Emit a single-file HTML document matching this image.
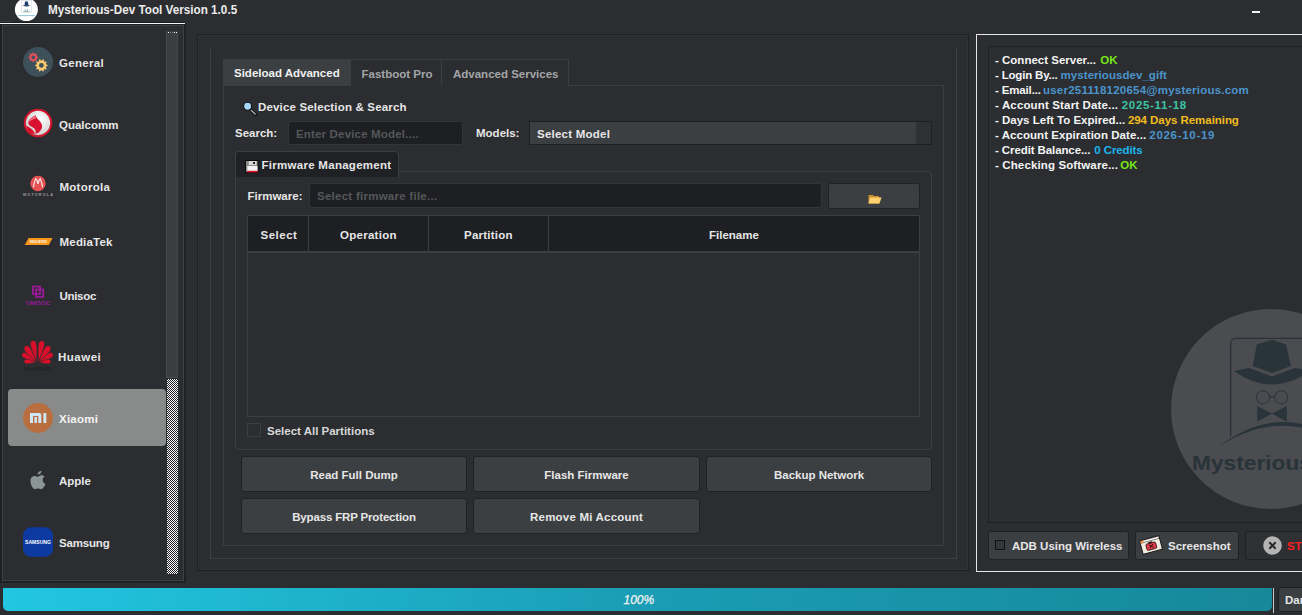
<!DOCTYPE html>
<html><head><meta charset="utf-8">
<style>
*{margin:0;padding:0;box-sizing:border-box}
html,body{width:1302px;height:615px;overflow:hidden;background:#2b2d30;font-family:"Liberation Sans",sans-serif;font-weight:bold;color:#e6e6e6}
.a{position:absolute}
.t{position:absolute;white-space:nowrap;line-height:14px;font-size:11.5px}
.bx{position:absolute;border:1px solid #3e4043}
.btn{position:absolute;background:#3c3f42;border:1px solid #1f2124;border-radius:3px}
</style></head><body>

<!-- title bar -->
<svg class="a" style="left:14px;top:0" width="26" height="22" viewBox="14 0 26 22"><circle cx="26.4" cy="9.6" r="11.5" fill="#fff"/><rect x="21.6" y="0.5" width="9.8" height="11.8" fill="none" stroke="#d0d8e0" stroke-width="0.6"/><path d="M25 1.6 H27.9 L28.4 5 H24.5Z M22.4 5.5 Q26.4 4.3 30.6 5.5 Q26.4 7.4 22.4 5.5Z" fill="#1e3a6a"/><path d="M25.2 9.2 V10.8 M27.4 9.2 V10.8 M23.5 11.4 H29.5" stroke="#3a7a80" stroke-width="0.6"/><rect x="18.2" y="15" width="16.6" height="1.1" fill="#9ccbe0"/></svg>
<div class="t" style="left:48px;top:2.5px;font-size:12.8px;color:#ececec;transform:scaleX(0.915);transform-origin:0 0">Mysterious-Dev Tool Version 1.0.5</div>
<div class="a" style="left:1252px;top:11px;width:8px;height:2px;background:#f0f0f0"></div>
<div class="a" style="left:0;top:21px;width:12px;height:1px;background:#3a3c3f"></div>
<div class="a" style="left:0;top:22px;width:185px;height:1px;background:#1c1d20"></div>
<div class="a" style="left:0;top:23px;width:185px;height:1px;background:#f4f4f4"></div>

<!-- sidebar -->
<div class="a" style="left:0;top:24px;width:186px;height:559px;background:#1f2023"></div>
<div class="a" style="left:2px;top:25px;width:182px;height:556px;border:1px solid #3e4043;background:#2b2d30"></div>
<!-- scrollbar -->
<div class="a" style="left:166px;top:31px;width:12px;height:347px;background:#3b3e41;border:1px solid #45484b;border-top:none"></div>
<div class="a" style="left:168px;top:32px;width:1px;height:1px;background:#fff"></div><div class="a" style="left:170px;top:32px;width:1px;height:1px;background:#777"></div><div class="a" style="left:172px;top:32px;width:1px;height:1px;background:#777"></div><div class="a" style="left:174px;top:32px;width:1px;height:1px;background:#fff"></div><div class="a" style="left:176px;top:32px;width:1px;height:1px;background:#fff"></div>
<div class="a" style="left:167px;top:379px;width:11px;height:195px;background-color:#1c1d20;background-image:conic-gradient(#fff 25%,transparent 0 50%,#fff 0 75%,transparent 0);background-size:2px 2px"></div>
<!-- selected xiaomi -->
<div class="a" style="left:8px;top:389px;width:158px;height:57px;border-radius:4px;background:#898b8b"></div>
<!-- icons -->
<svg class="a" style="left:0;top:25px" width="60" height="555" viewBox="0 25 60 555">
 <!-- general -->
 <circle cx="38" cy="62" r="15" fill="#3e515a"/>
 <path fill-rule="evenodd" fill="#e2505a" d="M38.19 56.95 L38.19 57.65 L36.81 58.47 L36.61 58.95 L37.00 60.51 L36.51 61.00 L34.95 60.61 L34.47 60.81 L33.65 62.19 L32.95 62.19 L32.13 60.81 L31.65 60.61 L30.09 61.00 L29.60 60.51 L29.99 58.95 L29.79 58.47 L28.41 57.65 L28.41 56.95 L29.79 56.13 L29.99 55.65 L29.60 54.09 L30.09 53.60 L31.65 53.99 L32.13 53.79 L32.95 52.41 L33.65 52.41 L34.47 53.79 L34.95 53.99 L36.51 53.60 L37.00 54.09 L36.61 55.65 L36.81 56.13Z M35.20 57.30 A1.9 1.9 0 1 0 31.40 57.30 A1.9 1.9 0 1 0 35.20 57.30Z"/>
 <path fill-rule="evenodd" fill="#fbc96c" d="M47.69 65.04 L47.69 65.76 L46.04 66.62 L45.87 67.14 L46.70 68.81 L46.28 69.39 L44.44 69.12 L44.00 69.44 L43.68 71.27 L43.01 71.49 L41.67 70.19 L41.13 70.19 L39.79 71.49 L39.12 71.27 L38.80 69.44 L38.36 69.12 L36.52 69.39 L36.10 68.81 L36.93 67.14 L36.76 66.62 L35.11 65.76 L35.11 65.04 L36.76 64.18 L36.93 63.66 L36.10 61.99 L36.52 61.41 L38.36 61.68 L38.80 61.36 L39.12 59.53 L39.79 59.31 L41.13 60.61 L41.67 60.61 L43.01 59.31 L43.68 59.53 L44.00 61.36 L44.44 61.68 L46.28 61.41 L46.70 61.99 L45.87 63.66 L46.04 64.18Z M43.80 65.40 A2.4 2.4 0 1 0 39.00 65.40 A2.4 2.4 0 1 0 43.80 65.40Z"/>
 <!-- qualcomm -->
 <defs><radialGradient id="qg" cx="0.6" cy="0.35" r="0.7"><stop offset="0" stop-color="#ffffff"/><stop offset="1" stop-color="#c9c9c9"/></radialGradient></defs>
 <circle cx="38" cy="123" r="13.2" fill="url(#qg)" stroke="#d0142c" stroke-width="2.1"/>
 <path d="M35.5 115.3 C32 117.3 28.3 119.8 28.3 122.8 C28.3 125 30.3 126.2 32.5 127.2 C35 128.4 36.2 130.2 35.6 133.8 C38.8 133.2 41.3 130.5 42 127.3 C42.6 124 40.2 121.5 38.2 119.5 C36.9 118.2 36.1 117 35.5 115.3Z" fill="#d8122e"/><path d="M35.5 115.3 C32 117.3 28.3 119.8 28.3 122.8 C30 121 32.5 119.5 35.8 118.6Z" fill="#ea6a7a"/><path d="M26.2 125.8 C29.5 127.2 33.6 129.4 34.9 134 C30 134.2 26.8 130.8 26.2 125.8Z" fill="#d8122e"/>
 <!-- motorola -->
 <circle cx="38" cy="183.5" r="7.7" fill="#e85252"/>
 <path d="M33.4 187.2 Q34.6 181 35.8 178.8 Q37 179.5 38 184 Q39 179.5 40.2 178.8 Q41.4 181 42.6 187.2" fill="none" stroke="#f4f4f4" stroke-width="1.1"/>
 <text x="23" y="196.2" font-size="3.8" font-family="Liberation Sans" font-weight="bold" fill="#9a9c9e" textLength="30" lengthAdjust="spacing">MOTOROLA</text>
 <!-- mediatek -->
 <path d="M28.6 238 L52.5 238 L48.9 245 L24.7 245Z" fill="#f7961c"/>
 <text x="38.5" y="243" font-size="3.4" font-family="Liberation Sans" font-weight="bold" fill="#fff4e0" text-anchor="middle">MEDIATEK</text>
 <!-- unisoc -->
 <rect x="33" y="286.5" width="7" height="7.5" fill="none" stroke="#9a1a9a" stroke-width="1.8"/>
 <rect x="36" y="289.5" width="7.2" height="7.5" fill="none" stroke="#9a1a9a" stroke-width="1.8"/>
 <text x="26" y="305" font-size="5.8" font-family="Liberation Sans" font-weight="bold" fill="#9a1a9a" textLength="24.5" lengthAdjust="spacingAndGlyphs">UNISOC</text>
 <!-- huawei -->
 <g fill="#d8102a" stroke="#2b2d30" stroke-width="0.45" transform="translate(37.5,362.2)"><path d="M0 0 C-1.50 -7.63 -3.00 -13.08 -3.00 -17.44 C-3.00 -21.15 -1.35 -21.80 0 -21.80 C1.35 -21.80 3.00 -21.15 3.00 -17.44 C3.00 -13.08 1.50 -7.63 0 0Z" transform="translate(-0.9,0) rotate(-10)"/><path d="M0 0 C-1.50 -7.63 -3.00 -13.08 -3.00 -17.44 C-3.00 -21.15 -1.35 -21.80 0 -21.80 C1.35 -21.80 3.00 -21.15 3.00 -17.44 C3.00 -13.08 1.50 -7.63 0 0Z" transform="translate(0.9,0) scale(-1,1) rotate(-10)"/><path d="M0 0 C-1.50 -6.82 -3.00 -11.70 -3.00 -15.60 C-3.00 -18.91 -1.35 -19.50 0 -19.50 C1.35 -19.50 3.00 -18.91 3.00 -15.60 C3.00 -11.70 1.50 -6.82 0 0Z" transform="translate(-1.0,0) rotate(-35)"/><path d="M0 0 C-1.50 -6.82 -3.00 -11.70 -3.00 -15.60 C-3.00 -18.91 -1.35 -19.50 0 -19.50 C1.35 -19.50 3.00 -18.91 3.00 -15.60 C3.00 -11.70 1.50 -6.82 0 0Z" transform="translate(1.0,0) scale(-1,1) rotate(-35)"/><path d="M0 0 C-1.35 -5.77 -2.70 -9.90 -2.70 -13.20 C-2.70 -16.00 -1.22 -16.50 0 -16.50 C1.22 -16.50 2.70 -16.00 2.70 -13.20 C2.70 -9.90 1.35 -5.77 0 0Z" transform="translate(-1.0,0) rotate(-60)"/><path d="M0 0 C-1.35 -5.77 -2.70 -9.90 -2.70 -13.20 C-2.70 -16.00 -1.22 -16.50 0 -16.50 C1.22 -16.50 2.70 -16.00 2.70 -13.20 C2.70 -9.90 1.35 -5.77 0 0Z" transform="translate(1.0,0) scale(-1,1) rotate(-60)"/><path d="M0 0 C-1.15 -4.38 -2.30 -7.50 -2.30 -10.00 C-2.30 -12.12 -1.03 -12.50 0 -12.50 C1.03 -12.50 2.30 -12.12 2.30 -10.00 C2.30 -7.50 1.15 -4.38 0 0Z" transform="translate(-0.8,0) rotate(-86)"/><path d="M0 0 C-1.15 -4.38 -2.30 -7.50 -2.30 -10.00 C-2.30 -12.12 -1.03 -12.50 0 -12.50 C1.03 -12.50 2.30 -12.12 2.30 -10.00 C2.30 -7.50 1.15 -4.38 0 0Z" transform="translate(0.8,0) scale(-1,1) rotate(-86)"/></g>
 <text x="23.2" y="370.6" font-size="6" font-family="Liberation Sans" fill="#222326" textLength="29" lengthAdjust="spacingAndGlyphs">HUAWEI</text>
 <!-- xiaomi -->
 <circle cx="38" cy="418" r="15" fill="#b86e3e"/>
 <path d="M30 413 H39.5 Q41.3 413 41.3 415 V423 H38.3 V416 H33 V423 H30Z" fill="#cfe6f6"/>
 <rect x="34.4" y="417" width="2.5" height="6" fill="#cfe6f6"/>
 <rect x="43.4" y="413" width="2.9" height="10" fill="#cfe6f6"/>
 <!-- apple -->
 <path d="M38 477 C35 475.2 30.5 475.8 30.5 481 C30.5 485.5 33.3 489.2 35 489.2 C36.3 489.2 37 488.5 38 488.5 C39 488.5 39.8 489.2 41 489.2 C42.8 489.2 44.5 486.5 45.5 484 C43.5 483 42.7 481.5 42.7 480 C42.7 478.5 43.5 477.3 44.6 476.7 C43.5 475.3 41.8 475 40.8 475.2 C39.6 475.4 38.8 476.3 38 477Z" fill="#8b9595"/>
 <path d="M37.6 474.6 C37.5 472.6 39 471 41.5 470.8 C41.5 473 40 474.5 37.6 474.6Z" fill="#8b9595"/>
 <!-- samsung -->
 <rect x="23" y="527.3" width="30" height="29.5" rx="8" fill="#0c3aa0"/>
 <text x="38" y="544.2" font-size="6.2" font-family="Liberation Sans" font-weight="bold" fill="#ffffff" text-anchor="middle" textLength="26" lengthAdjust="spacingAndGlyphs">SAMSUNG</text>
</svg>
<div class="t" style="left:59px;top:56px;letter-spacing:0.3px">General</div>
<div class="t" style="left:59px;top:117.5px">Qualcomm</div>
<div class="t" style="left:59.5px;top:180px;letter-spacing:0.25px">Motorola</div>
<div class="t" style="left:59.5px;top:235px;letter-spacing:0.2px">MediaTek</div>
<div class="t" style="left:59.5px;top:289px;letter-spacing:-0.3px">Unisoc</div>
<div class="t" style="left:58px;top:350px;letter-spacing:0.5px">Huawei</div>
<div class="t" style="left:59px;top:411.5px;color:#f4f4f4;letter-spacing:0.25px">Xiaomi</div>
<div class="t" style="left:59px;top:474px">Apple</div>
<div class="t" style="left:59px;top:536px;letter-spacing:-0.17px">Samsung</div>

<!-- main panel -->
<div class="a" style="left:197px;top:34px;width:772px;height:537px;border:1px solid #1f2023"></div>
<div class="a" style="left:198px;top:35px;width:770px;height:535px;border:1px solid #303236"></div>
<div class="bx" style="left:210px;top:47px;width:747px;height:512px;border-top-color:transparent"></div>
<!-- tabs -->
<div class="bx" style="left:223px;top:85px;width:721px;height:461px;border-color:#3c3e41"></div>
<div class="a" style="left:223px;top:59px;width:128px;height:27px;background:#3c3f42"></div>
<div class="a" style="left:350px;top:59px;width:92px;height:27px;border:1px solid #3c3e41;border-bottom:none;border-left:none"></div>
<div class="a" style="left:441px;top:59px;width:128px;height:27px;border:1px solid #3c3e41;border-bottom:none;border-left:none"></div>
<div class="a" style="left:351px;top:85px;width:217px;height:1px;background:#2b2d30"></div>
<div class="t" style="left:234px;top:66px;color:#f0f0f0">Sideload Advanced</div>
<div class="t" style="left:361.5px;top:67px;color:#a4a6a8">Fastboot Pro</div>
<div class="t" style="left:453px;top:67px;color:#a4a6a8">Advanced Services</div>

<!-- device selection -->
<svg class="a" style="left:238px;top:98px" width="24" height="20" viewBox="238 98 24 20"><line x1="251" y1="110" x2="255.6" y2="114.4" stroke="#101010" stroke-width="3.4" stroke-linecap="round"/><line x1="251.4" y1="110.4" x2="255.2" y2="114" stroke="#a8b4b8" stroke-width="1.4" stroke-linecap="round"/><circle cx="247.6" cy="106.2" r="4" fill="#a8d8f8" stroke="#101010" stroke-width="1.1"/></svg>
<div class="t" style="left:258px;top:100px;letter-spacing:0.17px">Device Selection &amp; Search</div>
<div class="t" style="left:235px;top:126px">Search:</div>
<div class="a" style="left:288px;top:121px;width:175px;height:24px;background:#1e1f22;border:1px solid #333538;border-radius:3px"></div>
<div class="t" style="left:296px;top:126.5px;color:#55575a;letter-spacing:0.17px">Enter Device Model....</div>
<div class="t" style="left:476px;top:126px">Models:</div>
<div class="a" style="left:529px;top:121px;width:403px;height:24px;background:#3c3f42;border:1px solid #1f2023"></div>
<div class="a" style="left:916px;top:122px;width:15px;height:22px;background:#2e3033"></div>
<div class="t" style="left:537px;top:126.5px;letter-spacing:0.24px">Select Model</div>

<!-- firmware group -->
<div class="a" style="left:235px;top:171px;width:697px;height:279px;border:1px solid #3c3e41;border-radius:0 4px 4px 4px"></div>
<div class="a" style="left:235px;top:151px;width:164px;height:26px;background:#202124;border:1px solid #3c3e41;border-bottom:none;border-radius:4px 4px 0 0"></div>
<svg class="a" style="left:242px;top:156px" width="20" height="20" viewBox="242 156 20 20"><rect x="245.5" y="160.5" width="12.5" height="12" fill="#8c8c8c" stroke="#0a0a0a" stroke-width="1"/><rect x="248.8" y="161" width="7.8" height="4" fill="#d8d8d8"/><rect x="253" y="162" width="2" height="2" fill="#202020"/><rect x="247.3" y="166" width="10.2" height="5" fill="#f2f2f2"/><rect x="247" y="170.8" width="10.6" height="1.6" fill="#e0102a"/></svg>
<div class="t" style="left:261.5px;top:158px;letter-spacing:0.28px">Firmware Management</div>
<div class="t" style="left:247.5px;top:189px">Firmware:</div>
<div class="a" style="left:309px;top:183px;width:513px;height:25px;background:#1e1f22;border:1px solid #333538;border-radius:3px"></div>
<div class="t" style="left:317px;top:189px;color:#55575a;letter-spacing:0.26px">Select firmware file...</div>
<div class="btn" style="left:828px;top:183px;width:92px;height:26px"></div>
<svg class="a" style="left:868px;top:194px" width="14" height="10" viewBox="0 0 14 10"><path d="M0.5 1 H5 L6 2 H11 V9.5 H0.5Z" fill="#c89030"/><path d="M2 3.5 H13.5 L11.5 9.5 H0.5Z" fill="#ffd070"/></svg>

<!-- table -->
<div class="a" style="left:247px;top:215px;width:673px;height:202px;border:1px solid #3c3e41;background:#2b2d30"></div>
<div class="a" style="left:248px;top:216px;width:671px;height:37px;background:#1e1f22;border-bottom:2px solid #3c3e41"></div>
<div class="a" style="left:308px;top:216px;width:1px;height:36px;background:#3c3e41"></div>
<div class="a" style="left:428px;top:216px;width:1px;height:36px;background:#3c3e41"></div>
<div class="a" style="left:548px;top:216px;width:1px;height:36px;background:#3c3e41"></div>
<div class="t" style="left:260.5px;top:228px;letter-spacing:0.5px">Select</div>
<div class="t" style="left:340px;top:228px;letter-spacing:0.27px">Operation</div>
<div class="t" style="left:464px;top:228px;letter-spacing:0.24px">Partition</div>
<div class="t" style="left:709px;top:228px">Filename</div>

<div class="a" style="left:247px;top:423px;width:14px;height:14px;border:1px solid #3c3e41"></div>
<div class="t" style="left:267px;top:423.5px;color:#d8d8d8">Select All Partitions</div>

<!-- buttons -->
<div class="btn" style="left:241px;top:456px;width:226px;height:36px"></div>
<div class="btn" style="left:473px;top:456px;width:227px;height:36px"></div>
<div class="btn" style="left:706px;top:456px;width:226px;height:36px"></div>
<div class="btn" style="left:241px;top:498px;width:226px;height:36px"></div>
<div class="btn" style="left:473px;top:498px;width:227px;height:36px"></div>
<div class="t" style="left:241px;top:467.5px;width:226px;text-align:center">Read Full Dump</div>
<div class="t" style="left:473px;top:467.5px;width:227px;text-align:center">Flash Firmware</div>
<div class="t" style="left:706px;top:467.5px;width:226px;text-align:center">Backup Network</div>
<div class="t" style="left:241px;top:509.5px;width:226px;text-align:center"><span style="letter-spacing:-0.16px">Bypass FRP Protection</span></div>
<div class="t" style="left:473px;top:509.5px;width:227px;text-align:center"><span style="letter-spacing:0.2px">Remove Mi Account</span></div>

<!-- right panel -->
<div class="a" style="left:976px;top:34px;width:330px;height:538px;border:1px solid #e8e8e8"></div>
<div class="a" style="left:988px;top:46px;width:320px;height:477px;border:1px solid #1f2023;background:#2b2d30"></div>
<!-- watermark -->
<svg class="a" style="left:1170px;top:309px" width="132" height="201" viewBox="1170 309 132 201">
 <circle cx="1271" cy="409" r="100" fill="#4a4c50"/>
 <g fill="#29333a" stroke="#29333a">
  <path d="M1230.7 436 V344 Q1230.7 338.4 1236.3 338.4 H1310" fill="none" stroke-width="1.3"/>
  <path d="M1272 339.7 L1286 344.6 L1290.9 366 L1272 372.9 L1252.9 366 L1256.8 344.6Z" stroke="none"/>
  <path d="M1233.8 370.9 L1249 368 L1272 376.4 L1295 368 L1310 370.9 Q1272 398 1233.8 370.9Z" stroke="none"/>
  <circle cx="1263" cy="397.3" r="6.6" fill="none" stroke-width="1"/>
  <circle cx="1281.2" cy="397.3" r="6.6" fill="none" stroke-width="1"/>
  <path d="M1269.6 397 H1274.6" stroke-width="1"/>
  <path d="M1257.2 406 L1272 413.8 L1257.2 421.6Z M1286.8 406 L1272 413.8 L1286.8 421.6Z" stroke="none"/>
  <path d="M1219.7 446 Q1265 412 1310 426 L1310 429.5 Q1265 417 1219.7 446Z" stroke="none"/>
 </g>
 <text x="1192" y="470" font-family="Liberation Sans" font-weight="bold" font-size="21" fill="#29333a" textLength="120" lengthAdjust="spacingAndGlyphs">Mysterious</text>
</svg>
<!-- log -->
<div class="t" style="left:995px;top:52.5px;color:#f4f4f4;letter-spacing:0px">- Connect Server...</div><div class="t" style="left:1100.3px;top:52.5px;color:#76e616;letter-spacing:0px">OK</div>
<div class="t" style="left:995px;top:67.5px;color:#f4f4f4;letter-spacing:-0.18px">- Login By...</div><div class="t" style="left:1060.6px;top:67.5px;color:#4c94cc;letter-spacing:0.05px">mysteriousdev_gift</div>
<div class="t" style="left:995px;top:82.5px;color:#f4f4f4;letter-spacing:-0.15px">- Email...</div><div class="t" style="left:1043px;top:82.5px;color:#4c94cc;letter-spacing:0.22px">user251118120654@mysterious.com</div>
<div class="t" style="left:995px;top:97.5px;color:#f4f4f4;letter-spacing:0.15px">- Account Start Date...</div><div class="t" style="left:1121.7px;top:97.5px;color:#3cc4a4;letter-spacing:0.7px">2025-11-18</div>
<div class="t" style="left:995px;top:112.5px;color:#f4f4f4;letter-spacing:0px">- Days Left To Expired...</div><div class="t" style="left:1127.9px;top:112.5px;color:#f2bc1e;letter-spacing:-0.05px">294 Days Remaining</div>
<div class="t" style="left:995px;top:127.5px;color:#f4f4f4;letter-spacing:0.05px">- Account Expiration Date...</div><div class="t" style="left:1149.3px;top:127.5px;color:#4c94cc;letter-spacing:0.7px">2026-10-19</div>
<div class="t" style="left:995px;top:142.5px;color:#f4f4f4;letter-spacing:-0.1px">- Credit Balance...</div><div class="t" style="left:1094.3px;top:142.5px;color:#1cb4ec;letter-spacing:-0.1px">0 Credits</div>
<div class="t" style="left:995px;top:157.5px;color:#f4f4f4;letter-spacing:0.13px">- Checking Software...</div><div class="t" style="left:1120.2px;top:157.5px;color:#76e616;letter-spacing:0px">OK</div>
<!-- bottom buttons -->
<div class="btn" style="left:988px;top:531px;width:141px;height:29px"></div>
<div class="a" style="left:995px;top:540px;width:10px;height:10px;border:1px solid #101113;background:#35383b"></div>
<div class="t" style="left:1012px;top:538.5px">ADB Using Wireless</div>
<div class="btn" style="left:1135px;top:531px;width:104px;height:29px"></div>
<svg class="a" style="left:1137px;top:532px" width="28" height="26" viewBox="0 0 28 26"><g transform="rotate(-15 14 13)"><rect x="4" y="6" width="20" height="14" fill="#f2ece0" stroke="#1e1a18" stroke-width="1"/><rect x="4.5" y="6.5" width="19" height="2.2" fill="#ffffff" stroke="#1e1a18" stroke-width="0.5"/><rect x="4.5" y="6.5" width="3" height="2.2" fill="#f08a30"/><rect x="9" y="11" width="10" height="6.5" rx="1.2" fill="#e23a48" stroke="#2a1616" stroke-width="0.8"/><rect x="12" y="9.6" width="4" height="1.6" fill="#2a1616"/><path d="M12 12.5 L16 16 M16 12.5 L12 16" stroke="#2a1616" stroke-width="0.9"/></g></svg>
<div class="t" style="left:1168px;top:538.5px">Screenshot</div>
<div class="a" style="left:1245px;top:531px;width:70px;height:29px;background:#2e3033;border:1px solid #1f2124;border-radius:3px"></div>
<svg class="a" style="left:1263px;top:536px" width="19" height="19" viewBox="0 0 19 19"><circle cx="9.5" cy="9.5" r="9.3" fill="#b4b4b4"/><path d="M6.3 6.3 L12.7 12.7 M12.7 6.3 L6.3 12.7" stroke="#2a2a2a" stroke-width="2"/></svg>
<div class="t" style="left:1287px;top:538.5px;color:#ff1e1e">STOP</div>
<!-- Da button -->
<div class="a" style="left:1273px;top:588px;width:1px;height:25px;background:#c8c8c8"></div>
<div class="a" style="left:1278px;top:587px;width:40px;height:25px;background:#3c3f42;border:1px solid #1f2124;border-radius:3px"></div>
<div class="t" style="left:1285px;top:593px">Dark</div>

<!-- progress -->
<div class="a" style="left:3px;top:588px;width:1269px;height:23px;border-radius:0 0 5px 5px;background:linear-gradient(90deg,#22c6e1,#1a9db5 50%,#16889a)"></div>
<div class="t" style="left:623.5px;top:592.5px;font-style:italic;font-weight:normal;font-size:12px;color:#f2f2f2;-webkit-text-stroke:0.25px #f2f2f2">100%</div>

</body></html>
